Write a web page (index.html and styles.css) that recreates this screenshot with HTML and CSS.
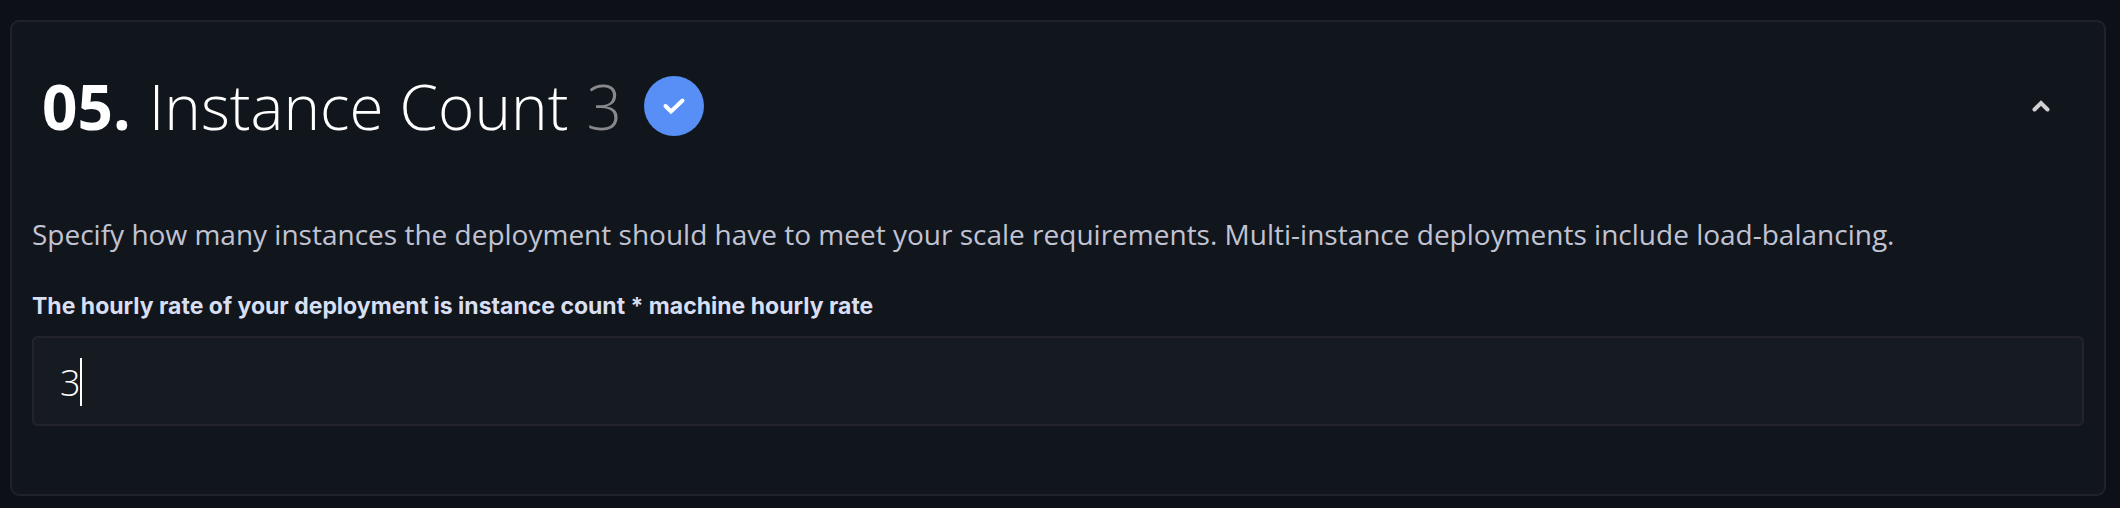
FILE: index.html
```html
<!DOCTYPE html>
<html lang="en">
<head>
<meta charset="utf-8">
<title>Instance Count</title>
<link rel="stylesheet" href="styles.css">
</head>
<body>
<section class="card">
  <header class="card-header">
    <h2 class="title"><strong class="step">05.</strong> Instance Count <span class="value">3</span></h2>
    <span class="badge">
      <svg class="check" viewBox="0 0 24 18" aria-hidden="true"><path d="M3.5 9 L9 14.5 L20.5 3.5"/></svg>
    </span>
    <button class="toggle" type="button" aria-label="Collapse section" aria-expanded="true">
      <svg class="chevron" viewBox="0 0 18 12" aria-hidden="true"><path d="M2.5 9.5 L9 3 L15.5 9.5"/></svg>
    </button>
  </header>
  <div class="card-body">
    <p class="description">Specify how many instances the deployment should have to meet your scale requirements. Multi-instance deployments include load-balancing.</p>
    <label class="label" for="count">The hourly rate of your deployment is instance count * machine hourly rate</label>
    <div class="field">
      <input class="input" id="count" type="text" inputmode="numeric" value="3">
      <span class="caret"></span>
    </div>
  </div>
</section>
</body>
</html>
```
FILE: styles.css
```css
* {
  box-sizing: border-box;
}

body {
  margin: 0;
  padding: 20px 14px 12px 10px;
  background: #0d1017;
  color: #fff;
  font-family: "Open Sans", sans-serif;
}

.card {
  padding: 30px 20px 68px;
  border: 2px solid #1f222a;
  border-radius: 9px;
  background: #11161d;
}

.card-header {
  display: flex;
  align-items: center;
  padding: 0 34px 0 10px;
}

.title {
  margin: 0;
  font-size: 62px;
  line-height: 108px;
  font-weight: 300;
}

.step {
  margin-right: 2px;
  font-weight: 700;
}

.value {
  margin-left: 2px;
  color: #87898c;
}

.badge {
  display: flex;
  align-items: center;
  justify-content: center;
  width: 60px;
  height: 60px;
  margin-left: 22px;
  border-radius: 50%;
  background: #588ff7;
}

.check {
  width: 24px;
  height: 18px;
  fill: none;
  stroke: #fff;
  stroke-width: 4;
  stroke-linecap: round;
}

.toggle {
  display: flex;
  margin-left: auto;
  padding: 0;
  border: 0;
  background: none;
}

.chevron {
  width: 18px;
  height: 12px;
  fill: none;
  stroke: #d0d0d1;
  stroke-width: 4;
  stroke-linecap: round;
}

.card-body {
  padding-top: 52px;
}

.description {
  margin: 0;
  color: #c1c3d3;
  font-size: 28px;
  line-height: 44px;
}

.label {
  display: block;
  margin: 34px 0 14px;
  color: #d8dff2;
  font-family: "Inter", sans-serif;
  font-size: 23px;
  line-height: 32px;
  font-weight: 700;
}

.field {
  position: relative;
}

.input {
  display: block;
  width: 100%;
  height: 90px;
  padding: 2px 26px 0;
  border: 2px solid #23232c;
  border-radius: 6px;
  outline: 0;
  background: #161a21;
  color: #fff;
  font-family: "Open Sans", sans-serif;
  font-size: 36px;
  font-weight: 300;
}

.caret {
  position: absolute;
  top: 22px;
  left: 48px;
  width: 2px;
  height: 48px;
  background: #fff;
}
```
